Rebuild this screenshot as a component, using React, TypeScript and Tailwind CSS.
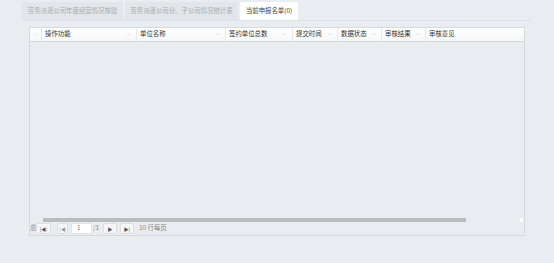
import { ChevronDown, Check } from 'lucide-react';

const tabs = [
  { label: '劳务派遣公司年度经营情况核验', width: 'w-[101px]' },
  { label: '劳务派遣公司分、子公司情况统计表', width: 'w-[113px]' },
  { label: '当前申报名单(0)', width: 'w-[58px]', active: true },
];

const columns = [
  { label: '操作功能', width: 'w-[95px]' },
  { label: '单位名称', width: 'w-[89px]' },
  { label: '签约单位总数', width: 'w-[67px]' },
  { label: '提交时间', width: 'w-[45px]' },
  { label: '数据状态', width: 'w-[44px]' },
  { label: '审核结果', width: 'w-[44px]' },
  { label: '审核意见', width: 'flex-1', noArrow: true },
];

function PagerButton({ children, className }: { children: React.ReactNode; className?: string }) {
  return (
    <div className={`h-[11px] flex items-center justify-center rounded-[2px] border border-[#dcdfe2] bg-[#f5f6f7] text-[#555] ${className ?? ''}`}>
      {children}
    </div>
  );
}

export default function App() {
  return (
    <div
      className="w-[554px] h-[263px] bg-[#e9ecf0] pl-[22px] pt-[2px] text-[6.4px] leading-none"
      style={{ fontFamily: '"Noto Sans CJK SC", "Noto Sans", sans-serif' }}
    >
      {/* Tabs */}
      <div className="w-[509px] h-[19px] flex gap-[2px] border-b border-[#dde0e4]">
        {tabs.map((t) => (
          <div
            key={t.label}
            className={`${t.width} h-[18px] flex items-center justify-center ${
              t.active ? 'bg-white text-[#444]' : 'bg-[#e2e5e9] text-[#a9acb0]'
            }`}
          >
            {t.label}
          </div>
        ))}
      </div>

      {/* Grid */}
      <div className="ml-[7px] mt-[6px] w-[496px] h-[209px] flex flex-col border border-[#d7dadd]">
        <div className="h-[14px] flex bg-gradient-to-b from-white to-[#f6f7f8] border-b border-[#d7dadd] text-[#333]">
          <div className="w-[12px] flex items-center justify-center border-r border-[#e6e8eb]">
            <Check className="w-[5px] h-[5px] text-[#cdd0d3]" strokeWidth={2} />
          </div>
          {columns.map((c) => (
            <div
              key={c.label}
              className={`${c.width} flex items-center justify-between pl-[3px] pr-[5px] border-r border-[#e6e8eb] last:border-r-0`}
            >
              <span>{c.label}</span>
              {!c.noArrow && <ChevronDown className="w-[5px] h-[5px] text-[#a5a8ab]" strokeWidth={1.5} />}
            </div>
          ))}
        </div>

        <div className="flex-1" />

        {/* horizontal scrollbar */}
        <div className="h-[5px] flex items-center pl-[13px] pr-[1px]">
          <div className="w-[423px] h-[4px] bg-[#b9bcbf]" />
          <div className="flex-1" />
          <div className="w-[3px] h-[4px] bg-white" />
        </div>

        {/* pager */}
        <div className="h-[13px] flex items-center text-[#666]">
          <span className="w-[6px] text-[#888]">总</span>
          <PagerButton className="w-[15px] text-[5px]">|◀:</PagerButton>
          <PagerButton className="w-[11px] ml-[6px] text-[5px] text-[#999]">|◀</PagerButton>
          <div className="w-[21px] h-[11px] ml-[3px] bg-white border border-[#e0e2e5] flex items-center pl-[5px] text-[#777]">1</div>
          <span className="ml-[1px] w-[10px] text-[#888]">/1</span>
          <PagerButton className="w-[14px] text-[5px]">▶</PagerButton>
          <PagerButton className="w-[14px] ml-[3px] text-[5px]">▶|</PagerButton>
          <span className="ml-[5px] text-[#888]">10 行每页</span>
        </div>
      </div>
    </div>
  );
}
